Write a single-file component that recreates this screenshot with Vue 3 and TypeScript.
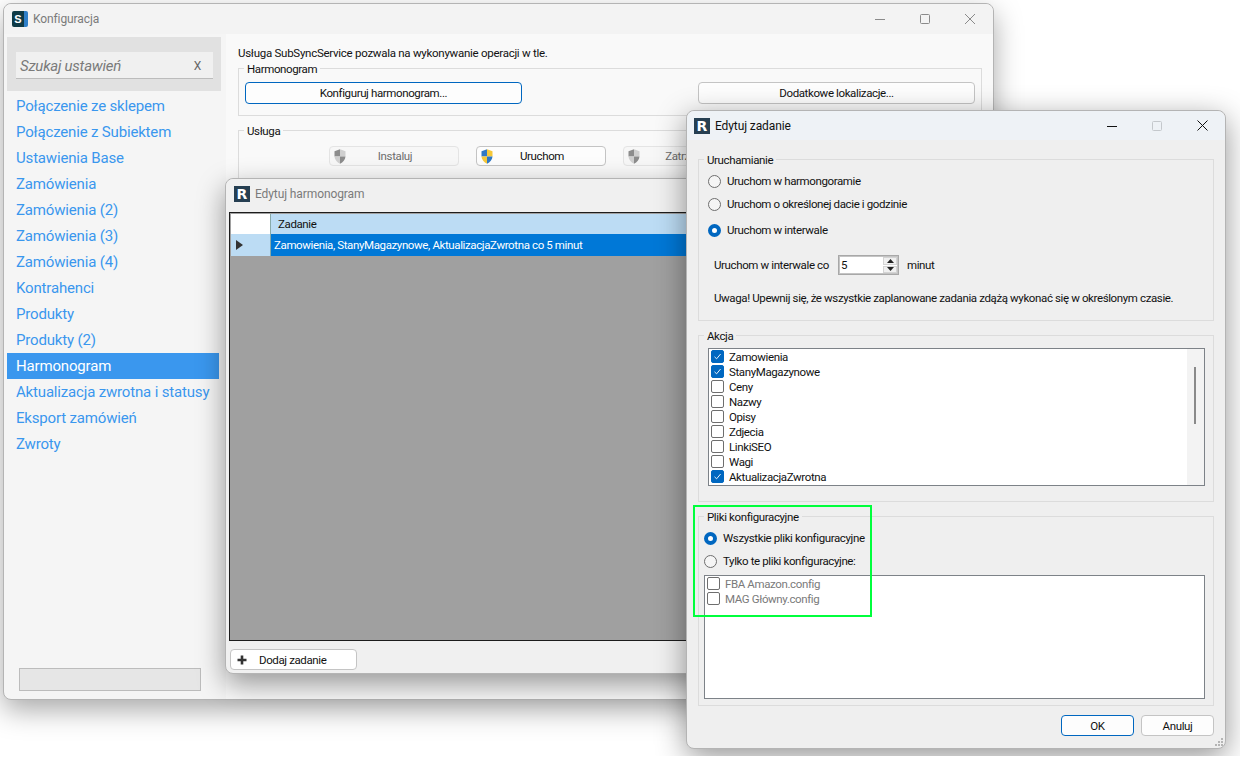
<script setup lang="ts">
const navItems: string[] = [
  'Połączenie ze sklepem', 'Połączenie z Subiektem', 'Ustawienia Base', 'Zamówienia',
  'Zamówienia (2)', 'Zamówienia (3)', 'Zamówienia (4)', 'Kontrahenci', 'Produkty',
  'Produkty (2)', 'Harmonogram', 'Aktualizacja zwrotna i statusy', 'Eksport zamówień', 'Zwroty'
]
const serviceButtons = [
  { label: 'Instaluj', active: false },
  { label: 'Uruchom', active: true },
  { label: 'Zatrzymaj', active: false }
]
const runOptions = [
  { label: 'Uruchom w harmongoramie', on: false, cls: 'r1' },
  { label: 'Uruchom o określonej dacie i godzinie', on: false, cls: 'r2' },
  { label: 'Uruchom w interwale', on: true, cls: 'r3' }
]
const actions = [
  { label: 'Zamowienia', on: true }, { label: 'StanyMagazynowe', on: true },
  { label: 'Ceny', on: false }, { label: 'Nazwy', on: false }, { label: 'Opisy', on: false },
  { label: 'Zdjecia', on: false }, { label: 'LinkiSEO', on: false }, { label: 'Wagi', on: false },
  { label: 'AktualizacjaZwrotna', on: true }
]
const configFiles: string[] = ['FBA Amazon.config', 'MAG Główny.config']
</script>

<template>
  <div class="stage">
    <!-- Main window -->
    <section class="win win-main">
      <header class="title t-main">
        <span class="logo-s"><span class="logo-s-l">S</span></span>
        <span class="title-text inactive">Konfiguracja</span>
        <div class="controls c-main">
          <svg width="10" height="10" viewBox="0 0 10 10"><path d="M0 5.5H10" stroke="#8a8a8a" /></svg>
          <svg width="10" height="10" viewBox="0 0 10 10"><rect x=".5" y=".5" width="9" height="9" rx="1" fill="none" stroke="#8a8a8a" /></svg>
          <svg width="10" height="10" viewBox="0 0 10 10"><path d="M0 0L10 10M10 0L0 10" stroke="#8a8a8a" /></svg>
        </div>
      </header>
      <div class="main-body">
        <aside class="sidebar">
          <div class="band">
            <div class="search"><span class="search-ph">Szukaj ustawień</span><span class="search-x">X</span></div>
          </div>
          <nav class="nav">
            <div v-for="item in navItems" :key="item" class="nav-item" :class="{ selected: item === 'Harmonogram' }">{{ item }}</div>
          </nav>
          <div class="progress"></div>
        </aside>
        <main class="pane">
          <p class="intro">Usługa SubSyncService pozwala na wykonywanie operacji w tle.</p>
          <div class="group g-sched">
            <div class="legend light">Harmonogram</div>
            <div class="sched-row">
              <button class="btn wide focus">Konfiguruj harmonogram...</button>
              <button class="btn wide">Dodatkowe lokalizacje...</button>
            </div>
          </div>
          <div class="group g-service">
            <div class="legend light">Usługa</div>
            <div class="service-row">
              <button v-for="b in serviceButtons" :key="b.label" class="btn svc" :class="{ off: !b.active }">
                <svg class="shield" width="12" height="15" viewBox="0 0 12 15">
                  <template v-if="b.active">
                    <path d="M6 .3L.5 2.2V7.5H6Z" fill="#2f78c4" /><path d="M6 .3L11.5 2.2V7.5H6Z" fill="#f5c83a" />
                    <path d="M.5 7.5C.7 10.8 3 13.4 6 14.7V7.5Z" fill="#f5c83a" /><path d="M11.5 7.5C11.3 10.8 9 13.4 6 14.7V7.5Z" fill="#2f78c4" />
                  </template>
                  <template v-else>
                    <path d="M6 .3L.5 2.2V7.5H6Z" fill="#8c8c8c" /><path d="M6 .3L11.5 2.2V7.5H6Z" fill="#cfcfcf" />
                    <path d="M.5 7.5C.7 10.8 3 13.4 6 14.7V7.5Z" fill="#cfcfcf" /><path d="M11.5 7.5C11.3 10.8 9 13.4 6 14.7V7.5Z" fill="#8c8c8c" />
                  </template>
                </svg>
                <span class="svc-label">{{ b.label }}</span>
              </button>
            </div>
          </div>
        </main>
      </div>
    </section>

    <!-- Schedule window -->
    <section class="win win-sched">
      <header class="title t-sched">
        <span class="logo-r">R</span>
        <span class="title-text inactive">Edytuj harmonogram</span>
      </header>
      <div class="grid">
        <div class="grid-head"><div class="corner"></div><div class="col-head">Zadanie</div></div>
        <div class="grid-row">
          <div class="row-head"><svg width="7" height="10" viewBox="0 0 7 10"><path d="M0 0L7 5L0 10Z" fill="#333" /></svg></div>
          <div class="row-cell">Zamowienia, StanyMagazynowe, AktualizacjaZwrotna co 5 minut</div>
        </div>
      </div>
      <button class="btn add">
        <svg width="10" height="10" viewBox="0 0 10 10"><path d="M5 0.5V9.5M0.5 5H9.5" stroke="#333" stroke-width="2.6" /></svg>
        <span>Dodaj zadanie</span>
      </button>
    </section>

    <!-- Task dialog -->
    <section class="win win-task">
      <header class="title t-task">
        <span class="logo-r">R</span>
        <span class="title-text">Edytuj zadanie</span>
        <div class="controls c-task">
          <svg width="10" height="10" viewBox="0 0 10 10"><path d="M0 5.5H10" stroke="#111" /></svg>
          <svg width="10" height="10" viewBox="0 0 10 10"><rect x=".5" y=".5" width="9" height="9" rx="1" fill="none" stroke="#c4c8cc" /></svg>
          <svg width="11" height="11" viewBox="0 0 11 11"><path d="M.5 .5L10.5 10.5M10.5 .5L.5 10.5" stroke="#111" /></svg>
        </div>
      </header>
      <div class="task-body">
        <div class="group g-run">
          <div class="legend">Uruchamianie</div>
          <label v-for="o in runOptions" :key="o.label" class="radio-row" :class="o.cls">
            <span class="radio" :class="{ on: o.on }"></span><span>{{ o.label }}</span>
          </label>
          <div class="interval">
            <span class="interval-label">Uruchom w interwale co</span>
            <div class="spin">
              <span class="spin-val">5</span>
              <div class="spin-btns">
                <span class="spin-b"><svg width="7" height="4" viewBox="0 0 7 4"><path d="M0 4L3.5 0L7 4Z" fill="#222" /></svg></span>
                <span class="spin-b"><svg width="7" height="4" viewBox="0 0 7 4"><path d="M0 0L3.5 4L7 0Z" fill="#222" /></svg></span>
              </div>
            </div>
            <span>minut</span>
          </div>
          <p class="warn">Uwaga! Upewnij się, że wszystkie zaplanowane zadania zdążą wykonać się w określonym czasie.</p>
        </div>

        <div class="group g-act">
          <div class="legend">Akcja</div>
          <div class="list list-act">
            <div class="rows">
              <div v-for="a in actions" :key="a.label" class="check-row">
                <span class="check" :class="{ on: a.on }">
                  <svg v-if="a.on" width="9" height="9" viewBox="0 0 9 9"><path d="M1.5 4.8L3.6 6.8L7.6 2" fill="none" stroke="#fff" stroke-width=".9" /></svg>
                </span>
                <span>{{ a.label }}</span>
              </div>
            </div>
            <div class="scrollbar"><div class="thumb"></div></div>
          </div>
        </div>

        <div class="group g-files">
          <div class="legend">Pliki konfiguracyjne</div>
          <label class="radio-row f1"><span class="radio on"></span><span>Wszystkie pliki konfiguracyjne</span></label>
          <label class="radio-row f2"><span class="radio"></span><span>Tylko te pliki konfiguracyjne:</span></label>
          <div class="list list-files">
            <div v-for="f in configFiles" :key="f" class="check-row file">
              <span class="check"></span><span>{{ f }}</span>
            </div>
          </div>
        </div>

        <div class="actions">
          <button class="btn dlg focus">OK</button>
          <button class="btn dlg">Anuluj</button>
        </div>
      </div>
      <svg class="grip" width="10" height="10" viewBox="0 0 10 10" fill="#b5b5b5">
        <rect x="7" y="1" width="2" height="2" /><rect x="4" y="4" width="2" height="2" /><rect x="7" y="4" width="2" height="2" />
        <rect x="1" y="7" width="2" height="2" /><rect x="4" y="7" width="2" height="2" /><rect x="7" y="7" width="2" height="2" />
      </svg>
    </section>

    <!-- Annotation -->
    <div class="annotation"></div>
  </div>
</template>

<style>
html, body { margin: 0; background: #fff; }
</style>

<style scoped>
.stage {
  position: relative;
  width: 1240px;
  height: 756px;
  overflow: hidden;
  background: #fff;
  font-family: Roboto, "Liberation Sans", sans-serif;
  font-size: 11.5px;
  letter-spacing: -.38px;
  color: #111;
}
p { margin: 0; }
button { font: inherit; letter-spacing: inherit; color: inherit; margin: 0; padding: 0; }

.win {
  position: absolute;
  box-sizing: border-box;
  display: flex;
  flex-direction: column;
  border: 1px solid #b4b4b4;
  border-radius: 8px;
  box-shadow: 0 10px 28px rgba(0, 0, 0, .34);
}
.win-main { left: 3px; top: 3px; width: 991px; height: 697px; background: #f5f5f5; }
.win-sched { left: 225px; top: 178px; width: 560px; height: 496px; background: #f0f0f0; box-shadow: 0 10px 28px rgba(0, 0, 0, .4); }
.win-task { left: 686px; top: 110px; width: 540px; height: 639px; background: #efefef; box-shadow: 0 8px 30px rgba(0, 0, 0, .42); }

.title { display: flex; align-items: center; flex-shrink: 0; border-radius: 8px 8px 0 0; }
.t-main { height: 30px; padding-left: 8px; background: #f3f3f3; }
.t-sched { height: 29px; padding-left: 8px; background: #f0f0f0; margin-bottom: 4px; }
.t-task { height: 29px; padding-left: 7px; background: #eef2f6; }
.title-text { margin-left: 5px; font-size: 12px; letter-spacing: -.1px; }
.inactive { color: #7b7b7b; }

.logo-s {
  width: 16px; height: 16px; box-sizing: border-box;
  display: flex; align-items: center; justify-content: center;
  background: #0e3a46; border-right: 4px solid #2f7fc8; border-radius: 2px;
}
.logo-s-l { color: #fff; font-size: 11px; font-weight: 700; letter-spacing: 0; font-family: "Liberation Sans", sans-serif; }
.logo-r {
  width: 16px; height: 16px; display: flex; align-items: center; justify-content: center;
  background: #263f52; color: #fff; font-size: 14px; font-weight: 700; letter-spacing: 0; font-family: "DejaVu Sans", sans-serif;
}

.controls { margin-left: auto; display: flex; align-items: center; }
.c-main { gap: 35px; padding-right: 18px; }
.c-task { gap: 35px; padding-right: 17px; }

.main-body { flex: 1; display: flex; min-height: 0; }
.sidebar { width: 222px; flex-shrink: 0; display: flex; flex-direction: column; }
.band { margin: 3px 0 0 3px; width: 214px; height: 54px; box-sizing: border-box; padding: 15px 0 0 9px; background: #e1e1e1; }
.search {
  width: 197px; height: 27px; box-sizing: border-box;
  display: flex; align-items: center; justify-content: space-between; padding: 2px 12px 0 4px;
  background: #f0f0f0; border-bottom: 1px solid #bcbcbc;
}
.search-ph { font-size: 15px; font-style: italic; letter-spacing: -.25px; color: #7a7a7a; }
.search-x { font-size: 12px; color: #666; }
.nav { margin: 2px 0 0 3px; }
.nav-item { width: 212px; height: 26px; box-sizing: border-box; padding-left: 9px; line-height: 26px; font-size: 15px; letter-spacing: -.17px; color: #3a97ee; }
.nav-item.selected { background: #3a97ee; color: #fff; }
.progress { margin: auto 0 8px 15px; width: 182px; height: 23px; box-sizing: border-box; background: #e6e6e6; border: 1px solid #bcbcbc; }

.pane { flex: 1; padding: 11px 11px 0 12px; background: #f9f9f9; }
.intro { line-height: 16px; letter-spacing: -.27px; }

.group { box-sizing: border-box; border: 1px solid #dcdcdc; }
.legend { width: fit-content; height: 16px; line-height: 16px; margin-top: -8px; padding: 0 3px; background: #efefef; }
.legend.light { background: #f9f9f9; }
.g-sched .legend { margin-left: -1px; }
.g-service .legend { margin-left: -85px; }
.g-run .legend, .g-act .legend { margin-left: -4px; }
.g-files .legend { margin-left: 0; }

.g-sched { margin-top: 7px; height: 48px; padding: 0 6px; }
.sched-row { margin-top: 5px; display: flex; justify-content: space-between; }
.g-service { margin-top: 14px; height: 49px; padding-left: 90px; }
.service-row { margin-top: 7px; display: flex; gap: 17px; }

.btn { box-sizing: border-box; background: #fdfdfd; border: 1px solid #c4c4c4; border-radius: 4px; }
.btn.focus { border-color: #0067c0; }
.wide { width: 277px; height: 22px; }
.svc { width: 130px; height: 20px; display: flex; align-items: center; padding-left: 4px; }
.svc.off { background: #f7f7f7; border-color: #e4e4e4; color: #6d6d6d; }
.svc-label { flex: 1; padding-right: 14px; }

.grid {
  box-sizing: border-box; margin: 0 0 0 3px; height: 429px; background: #a0a0a0; padding: 1px 0 0 1px;
  border: 1px solid #1c1c1c; border-right: none; overflow: hidden;
}
.grid-head { display: flex; height: 20px; }
.corner { width: 40px; background: #fff; border-right: 1px solid #8aa; box-sizing: border-box; }
.col-head { flex: 1; background: #bcdcf4; padding-left: 7px; line-height: 20px; }
.grid-row { display: flex; height: 22px; }
.row-head { width: 40px; box-sizing: border-box; background: #bcdcf4; display: flex; align-items: center; padding-left: 5px; border-right: 1px solid #8aa; }
.row-cell { flex: 1; background: #0078d7; color: #fff; line-height: 22px; padding-left: 3px; }
.add { margin: 8px 0 0 4px; width: 127px; height: 21px; background: #fff; display: flex; align-items: center; gap: 12px; padding-left: 6px; }

.task-body { padding: 19px 11px 0; }
.g-run { height: 162px; padding-left: 9px; }
.radio-row { display: flex; align-items: center; gap: 6px; height: 20px; }
.r1 { margin-top: 3px; }
.r2 { margin-top: 3px; }
.r3 { margin-top: 6px; }
.radio { width: 13px; height: 13px; box-sizing: border-box; border-radius: 50%; border: 1px solid #6e6e6e; background: #f5f5f5; flex-shrink: 0; }
.radio.on { border: 4px solid #0067c0; background: #fff; }
.interval { display: flex; align-items: center; height: 20px; margin: 15px 0 0 6px; }
.interval-label { width: 116px; flex-shrink: 0; white-space: nowrap; }
.spin { margin: 0 8px; width: 61px; height: 20px; box-sizing: border-box; display: flex; background: #fff; border: 1px solid #a8a8a8; outline: 1px solid #c4c4c4; outline-offset: -2px; }
.spin-val { flex: 1; padding-left: 2px; line-height: 18px; }
.spin-btns { width: 15px; padding: 1px 1px 1px 0; box-sizing: border-box; display: flex; flex-direction: column; gap: 1px; background: #fff; }
.spin-b { flex: 1; display: flex; align-items: center; justify-content: center; background: #f0f0f0; border: 1px solid #d4d4d4; }
.warn { margin: 15px 0 0 6px; line-height: 16px; white-space: nowrap; }

.g-act { margin-top: 14px; height: 167px; padding-left: 9px; }
.list { box-sizing: border-box; background: #fff; border: 1px solid #7d8288; }
.list-act { margin-top: 4px; width: 497px; height: 138px; display: flex; }
.rows { flex: 1; padding: 0 0 0 2px; }
.check-row { display: flex; align-items: center; gap: 5px; height: 15px; }
.check { width: 13px; height: 13px; box-sizing: border-box; border: 1px solid #6e6e6e; border-radius: 2px; background: #fff; display: flex; align-items: center; justify-content: center; flex-shrink: 0; }
.check.on { background: #0067c0; border-color: #0067c0; }
.scrollbar { width: 17px; background: #f3f3f3; padding: 18px 0 0 7px; box-sizing: border-box; }
.thumb { width: 2px; height: 57px; background: #8a8a8a; }

.g-files { margin-top: 14px; height: 190px; padding-left: 5px; }
.f1 { margin-top: 3px; }
.f2 { margin-top: 3px; }
.list-files { margin-top: 4px; width: 501px; height: 124px; padding: 0 0 0 2px; }
.file { color: #7a7a7a; }

.actions { display: flex; justify-content: flex-end; gap: 7px; margin-top: 9px; }
.dlg { width: 73px; height: 21px; }
.grip { position: absolute; right: 1px; bottom: 1px; }

.annotation {
  position: absolute; left: 693px; top: 505px; width: 179px; height: 112px;
  box-sizing: border-box; border: 2px solid #00ff3c; pointer-events: none;
}
</style>
